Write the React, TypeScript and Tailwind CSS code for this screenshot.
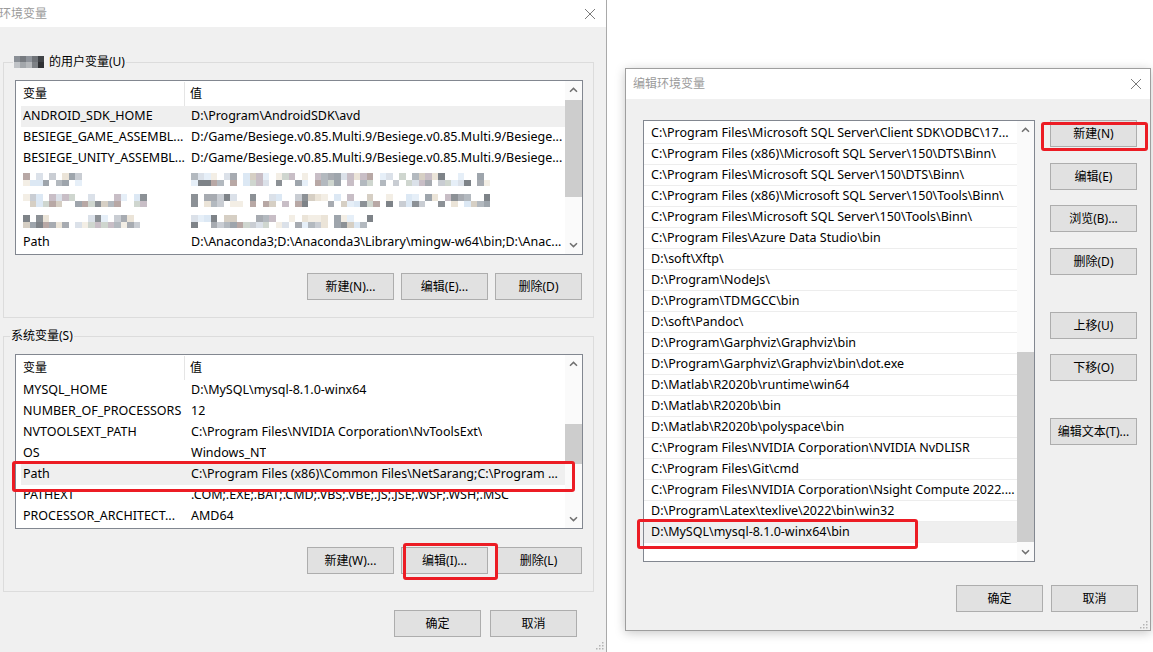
import type { ReactNode } from "react";

// ==================== 数据 ====================

type Row = { name: string; value: string; blur?: number[] };

const USER_ROWS: Row[] = [
  { name: "ANDROID_SDK_HOME", value: "D:\\Program\\AndroidSDK\\avd" },
  {
    name: "BESIEGE_GAME_ASSEMBL...",
    value: "D:/Game/Besiege.v0.85.Multi.9/Besiege.v0.85.Multi.9/Besiege...",
  },
  {
    name: "BESIEGE_UNITY_ASSEMBL...",
    value: "D:/Game/Besiege.v0.85.Multi.9/Besiege.v0.85.Multi.9/Besiege...",
  },
  { name: "", value: "", blur: [3, 9, 11, 46] },
  { name: "", value: "", blur: [7, 19, 23, 46] },
  { name: "", value: "", blur: [13, 18, 31, 28] },
  {
    name: "Path",
    value: "D:\\Anaconda3;D:\\Anaconda3\\Library\\mingw-w64\\bin;D:\\Anac...",
  },
];

const SYS_ROWS: Row[] = [
  { name: "MYSQL_HOME", value: "D:\\MySQL\\mysql-8.1.0-winx64" },
  { name: "NUMBER_OF_PROCESSORS", value: "12" },
  { name: "NVTOOLSEXT_PATH", value: "C:\\Program Files\\NVIDIA Corporation\\NvToolsExt\\" },
  { name: "OS", value: "Windows_NT" },
  {
    name: "Path",
    value: "C:\\Program Files (x86)\\Common Files\\NetSarang;C:\\Program ...",
  },
  { name: "PATHEXT", value: ".COM;.EXE;.BAT;.CMD;.VBS;.VBE;.JS;.JSE;.WSF;.WSH;.MSC" },
  { name: "PROCESSOR_ARCHITECT...", value: "AMD64" },
];

const PATH_ROWS = [
  "C:\\Program Files\\Microsoft SQL Server\\Client SDK\\ODBC\\17...",
  "C:\\Program Files (x86)\\Microsoft SQL Server\\150\\DTS\\Binn\\",
  "C:\\Program Files\\Microsoft SQL Server\\150\\DTS\\Binn\\",
  "C:\\Program Files (x86)\\Microsoft SQL Server\\150\\Tools\\Binn\\",
  "C:\\Program Files\\Microsoft SQL Server\\150\\Tools\\Binn\\",
  "C:\\Program Files\\Azure Data Studio\\bin",
  "D:\\soft\\Xftp\\",
  "D:\\Program\\NodeJs\\",
  "D:\\Program\\TDMGCC\\bin",
  "D:\\soft\\Pandoc\\",
  "D:\\Program\\Garphviz\\Graphviz\\bin",
  "D:\\Program\\Garphviz\\Graphviz\\bin\\dot.exe",
  "D:\\Matlab\\R2020b\\runtime\\win64",
  "D:\\Matlab\\R2020b\\bin",
  "D:\\Matlab\\R2020b\\polyspace\\bin",
  "C:\\Program Files\\NVIDIA Corporation\\NVIDIA NvDLISR",
  "C:\\Program Files\\Git\\cmd",
  "C:\\Program Files\\NVIDIA Corporation\\Nsight Compute 2022....",
  "D:\\Program\\Latex\\texlive\\2022\\bin\\win32",
  "D:\\MySQL\\mysql-8.1.0-winx64\\bin",
];

// ==================== 小部件 ====================

const PALETTE = [
  "#c9cdd3", "#a7abb1", "#dbe1e9", "#ebe4d8", "#b8a8a5", "#9ea5ac",
  "#dce8f4", "#cfd6cf", "#f3eee5", "#8c9196", "#c8bec6", "#e6eff8",
  "#b3b9bf", "#d6cfc4", "#7e8388",
];

// 打码马赛克（颜色按种子生成）
function Mosaic({ seed, cols }: { seed: number; cols: number }) {
  let s = seed * 7919 + 13;
  const rand = () => {
    s = (s * 9301 + 49297) % 233280;
    return s / 233280;
  };
  const cells: string[] = [];
  for (let i = 0; i < cols * 2; i++) {
    const r = rand();
    cells.push(r < 0.28 ? "transparent" : PALETTE[Math.floor(rand() * PALETTE.length)]);
  }
  return (
    <div
      className="grid"
      style={{ gridTemplateColumns: `repeat(${cols}, 6.5px)`, gridAutoRows: "6.5px" }}
    >
      {cells.map((c, i) => (
        <div key={i} style={{ background: c }} />
      ))}
    </div>
  );
}

function Btn({ children }: { children: ReactNode }) {
  return (
    <button className="h-[27px] w-[87px] bg-[#e1e1e1] border border-[#adadad] text-[12px] text-black flex items-center justify-center">
      {children}
    </button>
  );
}

function CloseX() {
  return (
    <svg width="12" height="12" viewBox="0 0 12 12" className="text-[#7a7a7a]">
      <path d="M1 1L11 11M11 1L1 11" stroke="currentColor" strokeWidth="1" />
    </svg>
  );
}

function Chevron({ down }: { down?: boolean }) {
  return (
    <svg width="9" height="6" viewBox="0 0 9 6">
      <path
        d={down ? "M1 1.2L4.5 4.6L8 1.2" : "M1 4.8L4.5 1.4L8 4.8"}
        fill="none"
        stroke="#707070"
        strokeWidth="1.5"
      />
    </svg>
  );
}

function ScrollBar({ thumb }: { thumb: string }) {
  return (
    <div className="w-[17px] shrink-0 flex flex-col bg-[#fafafa]">
      <div className="h-[18px] flex items-center justify-center">
        <Chevron />
      </div>
      <div className="flex-1">
        <div className={`bg-[#cdcdcd] ${thumb}`} />
      </div>
      <div className="h-[18px] flex items-center justify-center">
        <Chevron down />
      </div>
    </div>
  );
}

function Grip() {
  return (
    <svg width="10" height="10" viewBox="0 0 10 10">
      {[
        [8, 2], [8, 5], [8, 8], [5, 5], [5, 8], [2, 8],
      ].map(([x, y], i) => (
        <rect key={i} x={x} y={y} width="1.5" height="1.5" fill="#b4b4b4" />
      ))}
    </svg>
  );
}

// 红色标注框
function Mark({ className }: { className: string }) {
  return (
    <div
      className={`absolute border-[3px] border-[#ec1c24] rounded-[3px] pointer-events-none ${className}`}
    />
  );
}

// ==================== 变量列表 ====================

function VarList({
  rows,
  selected,
  thumb,
  children,
}: {
  rows: Row[];
  selected: number;
  thumb: string;
  children?: ReactNode;
}) {
  return (
    <div className="relative w-[568px] h-[175px] bg-white border border-[#828790] flex">
      <div className="flex-1 min-w-0 pt-px">
        <div className="h-[24px] flex items-center">
          <div className="w-[169px] h-full pl-[7px] flex items-center border-r border-[#e5e5e5]">
            变量
          </div>
          <div className="pl-[5px]">值</div>
        </div>
        {rows.map((r, i) => (
          <div
            key={i}
            className={`h-[21px] ml-[5px] flex items-center text-[12.5px] ${i === selected ? "bg-[#efefef]" : ""}`}
          >
            <div className="w-[168px] pl-[2px] whitespace-nowrap overflow-hidden">
              {r.blur ? <Mosaic seed={r.blur[0]} cols={r.blur[1]} /> : r.name}
            </div>
            <div className="pl-[2px] whitespace-nowrap overflow-hidden">
              {r.blur ? <Mosaic seed={r.blur[2]} cols={r.blur[3]} /> : r.value}
            </div>
          </div>
        ))}
      </div>
      <ScrollBar thumb={thumb} />
      {children}
    </div>
  );
}

// ==================== 左：环境变量 ====================

function EnvDialog() {
  return (
    <div className="w-[607px] h-[652px] shrink-0 flex flex-col border-r border-[#a9a9a9]">
      <div className="h-[27px] bg-white flex items-center justify-between pr-[10px]">
        <span className="text-[12px] text-[#9b9b9b] -ml-px">环境变量</span>
        <CloseX />
      </div>
      <div className="flex-1 bg-[#f0f0f0] pl-[3px] pr-[12px] pt-[26px]">
        <fieldset className="border border-[#dcdcdc] pl-[11px] pb-[17px]">
          <legend className="-ml-[2px] px-[1px] h-[18px] leading-[18px] flex items-center gap-[5px]">
            <div className="grid grid-cols-[repeat(5,6px)] auto-rows-[6px]">
              {["#8a8f96", "#777b80", "#8f949b", "#6f7378", "#3f4246", "#c0c3c7", "#a3a7ab", "#b5b8bb", "#7d8185", "#2f3134"].map(
                (c, i) => (
                  <div key={i} style={{ background: c }} />
                )
              )}
            </div>
            <span>的用户变量(U)</span>
          </legend>
          <div className="mt-[9px]">
            <VarList rows={USER_ROWS} selected={0} thumb="mt-px h-[97px]" />
          </div>
          <div className="mt-[18px] w-[567px] flex justify-end gap-[7px]">
            <Btn>新建(N)...</Btn>
            <Btn>编辑(E)...</Btn>
            <Btn>删除(D)</Btn>
          </div>
        </fieldset>

        <fieldset className="mt-[9px] border border-[#dcdcdc] pl-[11px] pb-[17px]">
          <legend className="-ml-[5px] px-[1px] h-[18px] leading-[18px]">系统变量(S)</legend>
          <div className="mt-[9px]">
            <VarList rows={SYS_ROWS} selected={4} thumb="mt-[51px] h-[40px]">
              <Mark className="-left-[4px] top-[106px] w-[563px] h-[31px]" />
            </VarList>
          </div>
          <div className="mt-[18px] w-[567px] flex justify-end gap-[7px]">
            <Btn>新建(W)...</Btn>
            <div className="relative">
              <Btn>编辑(I)...</Btn>
              <Mark className="left-[2px] -top-[4px] w-[95px] h-[37px]" />
            </div>
            <Btn>删除(L)</Btn>
          </div>
        </fieldset>

        <div className="mt-[18px] pr-[17px] flex justify-end gap-[9px]">
          <Btn>确定</Btn>
          <Btn>取消</Btn>
        </div>
        <div className="flex justify-end -mr-[10px] mt-[3px]">
          <Grip />
        </div>
      </div>
    </div>
  );
}

// ==================== 右：编辑环境变量 ====================

function EditDialog() {
  return (
    <div className="ml-[18px] mt-[68px] w-[526px] h-[563px] shrink-0 flex flex-col border border-[#9e9e9e] shadow-[0_2px_10px_rgba(0,0,0,0.22)]">
      <div className="h-[30px] bg-white flex items-center justify-between pl-[7px] pr-[8px]">
        <span className="text-[12px] text-[#9b9b9b]">编辑环境变量</span>
        <CloseX />
      </div>
      <div className="flex-1 bg-[#f0f0f0] pl-[17px] pr-[12px] pt-[21px] flex flex-col">
        <div className="flex items-start">
          <div className="relative w-[392px] h-[442px] bg-white border border-[#828790] flex">
            <div className="flex-1 min-w-0 pt-[2px]">
              {PATH_ROWS.map((p, i) => (
                <div
                  key={i}
                  className={`h-[21px] flex items-center pl-[7px] text-[12.5px] border-b border-[#ededed] whitespace-nowrap overflow-hidden ${
                    i === PATH_ROWS.length - 1 ? "bg-[#efefef]" : ""
                  }`}
                >
                  {p}
                </div>
              ))}
            </div>
            <ScrollBar thumb="mt-[213px] h-[190px]" />
            <Mark className="-left-[7px] top-[398px] w-[281px] h-[30px]" />
          </div>
          <div className="ml-[15px] flex flex-col">
            <div className="relative">
              <Btn>新建(N)</Btn>
              <Mark className="-left-[9px] top-[2px] w-[107px] h-[29px]" />
            </div>
            <div className="mt-[16px]"><Btn>编辑(E)</Btn></div>
            <div className="mt-[15px]"><Btn>浏览(B)...</Btn></div>
            <div className="mt-[16px]"><Btn>删除(D)</Btn></div>
            <div className="mt-[37px]"><Btn>上移(U)</Btn></div>
            <div className="mt-[15px]"><Btn>下移(O)</Btn></div>
            <div className="mt-[37px]"><Btn>编辑文本(T)...</Btn></div>
          </div>
        </div>
        <div className="mt-[23px] flex justify-end gap-[8px]">
          <Btn>确定</Btn>
          <Btn>取消</Btn>
        </div>
        <div className="flex justify-end -mr-[10px] mt-auto mb-[1px]">
          <Grip />
        </div>
      </div>
    </div>
  );
}

// ==================== 主组件 ====================

export default function App() {
  return (
    <div className="w-[1153px] h-[652px] bg-white flex items-start overflow-hidden text-[12px] text-black font-['Noto_Sans','Noto_Sans_CJK_SC',sans-serif]">
      <EnvDialog />
      <EditDialog />
    </div>
  );
}
